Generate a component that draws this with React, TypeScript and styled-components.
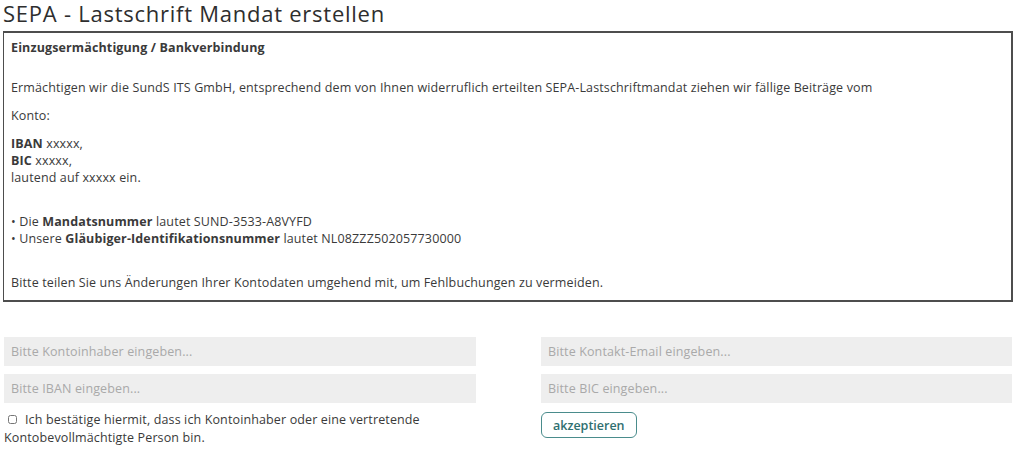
import React, { useState } from 'react'
import styled, { createGlobalStyle } from 'styled-components'

const GlobalStyle = createGlobalStyle`
  body {
    margin: 0;
    background: #ffffff;
    font-family: "Open Sans", "Liberation Sans", sans-serif;
    color: #333333;
  }
`

const Page = styled.div`
  width: 1024px;
  height: 464px;
  padding: 0 11px 0 3px;
  box-sizing: border-box;
  overflow: hidden;
`

const Title = styled.h1`
  margin: 0;
  height: 31px;
  padding-top: 1px;
  box-sizing: border-box;
  font-family: "Open Sans", "Liberation Sans", sans-serif;
  font-weight: 500;
  font-size: 22px;
  line-height: 24px;
  letter-spacing: 0.75px;
  color: #2e2e2e;
`

const MandateBox = styled.section`
  border: 2px solid #4d4d4d;
  border-left-width: 1px;
  padding: 6px 7px 9px;
  font-size: 12.5px;
  line-height: 17px;
  letter-spacing: 0.13px;
  color: #3a3a3a;
`

const BoxHeading = styled.div`
  font-weight: 700;
  margin-bottom: 23px;
`

const Paragraph = styled.p<{ gap?: number }>`
  margin: 0 0 ${({ gap }) => gap ?? 11}px;
`

const FormGrid = styled.div`
  display: grid;
  grid-template-columns: 472px 471px;
  column-gap: 65px;
  row-gap: 8px;
  margin-top: 35px;
  padding-left: 1px;
`

const Field = styled.input`
  height: 29px;
  border: none;
  background: #eeeeee;
  padding: 0 7px;
  font-family: inherit;
  font-size: 12.5px;
  letter-spacing: 0.13px;
  color: #333333;
  outline: none;
  &::placeholder {
    color: #a9a9a9;
  }
`

const ConfirmLabel = styled.label`
  font-size: 12.5px;
  line-height: 18px;
  letter-spacing: 0.13px;
  color: #3a3a3a;
`

const Check = styled.input`
  width: 9px;
  height: 9px;
  margin: 0 8px 0 4px;
  vertical-align: 0px;
`

const AcceptButton = styled.button`
  justify-self: start;
  height: 26px;
  padding: 0 11px;
  margin-top: 1px;
  border: 1px solid #4a8c8c;
  border-radius: 6px;
  background: #ffffff;
  color: #2f6f70;
  font-family: inherit;
  font-weight: 600;
  font-size: 12.5px;
  cursor: pointer;
`

export default function App() {
  const [confirmed, setConfirmed] = useState<boolean>(false)

  return (
    <>
      <GlobalStyle />
      <Page>
        <Title>SEPA - Lastschrift Mandat erstellen</Title>
        <MandateBox>
          <BoxHeading>Einzugsermächtigung / Bankverbindung</BoxHeading>
          <Paragraph>
            Ermächtigen wir die SundS ITS GmbH, entsprechend dem von Ihnen widerruflich erteilten SEPA-Lastschriftmandat ziehen wir fällige Beiträge vom
          </Paragraph>
          <Paragraph>Konto:</Paragraph>
          <Paragraph gap={27}>
            <b>IBAN</b> xxxxx,<br />
            <b>BIC</b> xxxxx,<br />
            lautend auf xxxxx ein.
          </Paragraph>
          <Paragraph gap={27}>
            • Die <b>Mandatsnummer</b> lautet SUND-3533-A8VYFD<br />
            • Unsere <b>Gläubiger-Identifikationsnummer</b> lautet NL08ZZZ502057730000
          </Paragraph>
          <Paragraph gap={0}>
            Bitte teilen Sie uns Änderungen Ihrer Kontodaten umgehend mit, um Fehlbuchungen zu vermeiden.
          </Paragraph>
        </MandateBox>
        <FormGrid>
          <Field placeholder="Bitte Kontoinhaber eingeben..." />
          <Field placeholder="Bitte Kontakt-Email eingeben..." />
          <Field placeholder="Bitte IBAN eingeben..." />
          <Field placeholder="Bitte BIC eingeben..." />
          <ConfirmLabel>
            <Check type="checkbox" checked={confirmed} onChange={() => setConfirmed(c => !c)} />
            Ich bestätige hiermit, dass ich Kontoinhaber oder eine vertretende Kontobevollmächtigte Person bin.
          </ConfirmLabel>
          <AcceptButton>akzeptieren</AcceptButton>
        </FormGrid>
      </Page>
    </>
  )
}
